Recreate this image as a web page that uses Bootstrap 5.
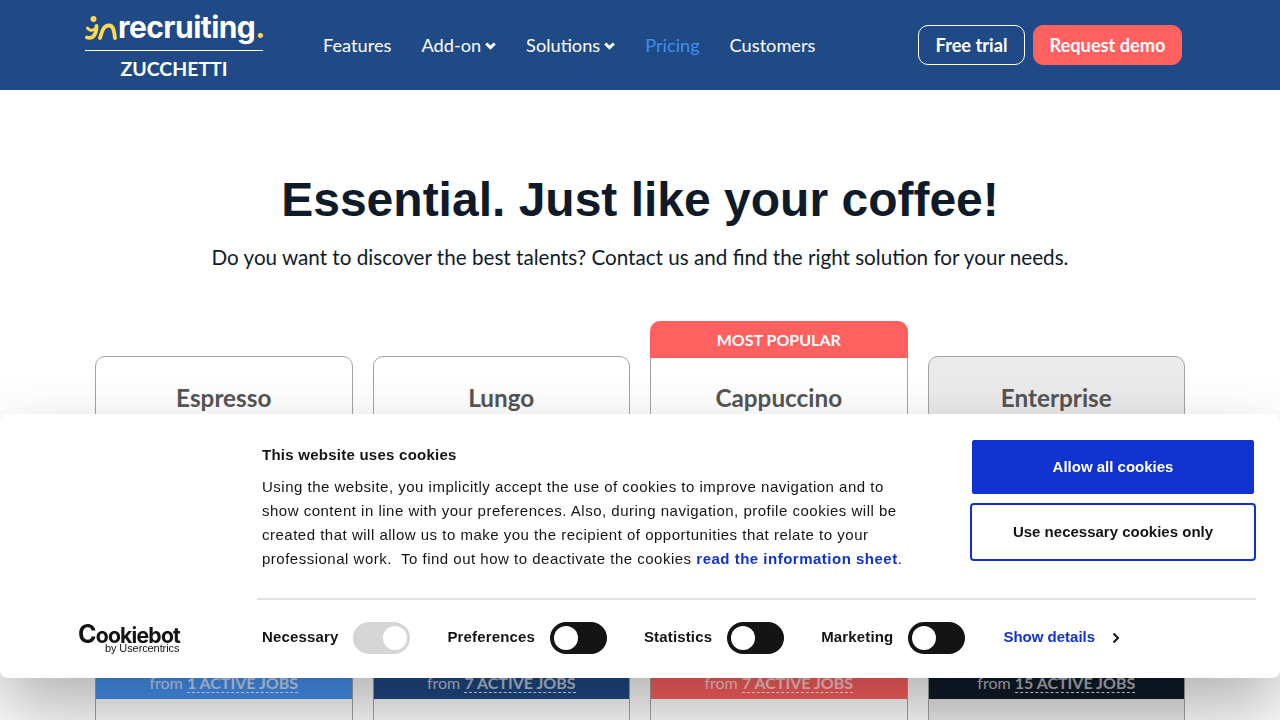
<!DOCTYPE html>
<html lang="en">

<head>
    <meta charset="UTF-8">
    <meta name="viewport" content="width=device-width, initial-scale=1.0">
    <title>Pricing - inRecruiting</title>
    <link href="https://cdn.jsdelivr.net/npm/bootstrap@5.3.3/dist/css/bootstrap.min.css" rel="stylesheet">
    <style>
        html, body { height: 720px; overflow: hidden; }
        body { font-family: "Lato", sans-serif; color: #101b29; background: #fff; }

        /* top bar */
        .top-bar { background: #1f4a85; height: 90px; padding: 0; }
        .page-wrap { width: 1110px; margin: 0 auto; }
        .brand-box { width: 178px; margin-right: 45px; padding: 0; color: #fff; }
        .brand-line { display: flex; align-items: center; height: 37px; border-bottom: 1px solid #fff; margin-bottom: 6px; padding-bottom: 4px; box-sizing: content-box; }
        .brand-word { font-family: "Inter", sans-serif; font-weight: 700; font-size: 30px; letter-spacing: -.55px; line-height: 37px; color: #fff; margin-left: 1px; }
        .brand-dot { color: #ffd84d; }
        .brand-sub { font-weight: 700; font-size: 19.5px; line-height: 24px; text-align: center; color: #fff; }
        .top-bar .nav-link { font-size: 18.2px; color: #fff; padding: 0; margin: 0 15px; line-height: 24px; }
        .top-bar .nav-link.active-page { color: #3f8ef0; }
        .nav-chev { width: 11px; height: 8px; margin-left: 4px; vertical-align: 2px; }
        .btn-trial, .btn-demo { font-size: 18.2px; font-weight: 700; height: 40px; line-height: 24px; border-radius: 10px; color: #fff; padding: 7px 0; }
        .btn-trial { border: 1px solid #fff; background: transparent; width: 107px; }
        .btn-demo { border: 1px solid #ff6060; background: #ff6060; width: 149px; margin-left: 8px; margin-right: 13px; }

        /* heading */
        .hero-title { font-family: "Liberation Sans", sans-serif; font-weight: 700; font-size: 48px; line-height: 60px; margin: 80px 0 0; text-align: center; color: #101b29; }
        .hero-sub { font-size: 20.65px; line-height: 30px; margin: 12px 0 0; text-align: center; color: #101b29; }

        /* plans */
        .plan-row { margin: 49px 0 0; --bs-gutter-x: 20px; }
        .plan-col { padding-top: 35px; }
        .plan-col.is-popular { padding-top: 0; }
        .popular-tab { background: #ff6060; color: #fff; font-weight: 700; font-size: 16px; height: 37px; line-height: 37px; text-align: center; border-radius: 10px 10px 0 0; margin-bottom: -2px; position: relative; }
        .plan-box { border: 1px solid #a3a3a3; border-radius: 10px; background: #fff; overflow: hidden; }
        .is-popular .plan-box { border-radius: 0; border-top: 0; padding-top: 1px; }
        .plan-box.is-dark { background: #ebebeb; }
        .plan-name { font-size: 24.3px; font-weight: 700; color: #555; line-height: 30px; text-align: center; margin: 26px 0 0; }
        .plan-gap { height: 243px; }
        .plan-band { height: 43px; padding-top: 16px; line-height: 22px; text-align: center; font-size: 16px; color: rgba(255, 255, 255, .7); }
        .plan-band b { border-bottom: 1px dashed rgba(255, 255, 255, .85); }
        .band-blue { background: #4894f4; }
        .band-navy { background: #1f4a85; }
        .band-red { background: #ff6060; }
        .band-dark { background: #101b29; }
        .plan-rest { height: 120px; }

        /* cookie banner */
        .cookie-banner { position: fixed; left: 0; right: 0; top: 414px; height: 264px; background: #fff; border-radius: 8px; box-shadow: 0 32px 68px rgba(0, 0, 0, .3); font-family: "Liberation Sans", sans-serif; color: #141414; z-index: 10; }
        .cookie-top { padding: 26px 24px 0 262px; height: 184px; }
        .cookie-copy { width: 645px; font-size: 15px; line-height: 24px; letter-spacing: .5px; }
        .cookie-copy h2 { font-size: 15px; font-weight: 700; line-height: 30px; margin: 0 0 5px; letter-spacing: .25px; }
        .cookie-copy p { margin: 0; }
        .cookie-copy a, .show-more { color: #1032cf; font-weight: 700; text-decoration: none; }
        .cookie-btns { width: 286px; margin-left: auto; }
        .btn-allow, .btn-necessary { display: block; font-size: 15px; font-weight: 700; border-radius: 2px; }
        .btn-allow { width: 282px; height: 54px; margin: 0 2px 9px; background: #1032cf; border: 1px solid #1032cf; color: #fff; }
        .btn-necessary { width: 286px; height: 58px; background: #fff; border: 2px solid #1032cf; border-radius: 4px; color: #141414; }
        .cookie-rule { height: 2px; background: #e2e2e2; margin: 0 24px 0 257px; }
        .cookie-bottom { height: 75px; }
        .cookie-logo { width: 262px; padding-left: 78px; padding-top: 2px; color: #141414; }
        .logo-word { font-family: "Inter", sans-serif; font-weight: 700; font-size: 21.2px; line-height: 18px; letter-spacing: -.8px; }
        .logo-word span { font-size: 25px; }
        .logo-by { font-size: 11px; line-height: 8px; margin-left: 27px; letter-spacing: -.1px; }
        .consent-item { display: flex; align-items: center; font-size: 15px; font-weight: 700; letter-spacing: .15px; margin-right: 37px; }
        .consent-item span { margin-right: 15px; }
        .switch-pill { width: 57px; height: 32px; border-radius: 16px; background: #141414; position: relative; display: inline-block; }
        .switch-pill::after { content: ""; position: absolute; left: 4px; top: 4px; width: 24px; height: 24px; border-radius: 50%; background: #fff; }
        .switch-pill.is-locked { background: #d6d6d6; }
        .switch-pill.is-locked::after { left: auto; right: 3px; }
        .show-more { font-size: 15px; margin-left: 1px; display: flex; align-items: center; }
        .show-more svg { margin-left: 17px; }
    </style>
</head>

<body>
    <nav class="navbar top-bar">
        <div class="page-wrap d-flex align-items-center">
            <a class="brand-box text-decoration-none" href="#">
                <div class="brand-line">
                    <svg width="32" height="26" viewBox="0 0 32 26" class="flex-shrink-0">
                        <circle cx="8.500" cy="4" r="3" fill="#ffd84d"/>
                        <path d="M2 22.500C7 24 11.500 21 11.500 11" fill="none" stroke="#ffd84d" stroke-width="3.800" stroke-linecap="round"/>
                        <path d="M2.500 13C4 15.500 7 16 10 14" fill="none" stroke="#ffd84d" stroke-width="3" stroke-linecap="round"/>
                        <path d="M15 23C17 17 18 10.500 24 10.500C28.500 10.500 29 16 30 23" fill="none" stroke="#ffd84d" stroke-width="3.800" stroke-linecap="round"/>
                    </svg>
                    <span class="brand-word">recruiting<span class="brand-dot">.</span></span>
                </div>
                <div class="brand-sub">ZUCCHETTI</div>
            </a>
            <ul class="nav">
                <li class="nav-item"><a class="nav-link" href="#">Features</a></li>
                <li class="nav-item"><a class="nav-link" href="#">Add-on<svg class="nav-chev" viewBox="0 0 11 8"><path d="M1.200 1.500 5.500 5.600 9.800 1.500" fill="none" stroke="#fff" stroke-width="3"/></svg></a></li>
                <li class="nav-item"><a class="nav-link" href="#">Solutions<svg class="nav-chev" viewBox="0 0 11 8"><path d="M1.200 1.500 5.500 5.600 9.800 1.500" fill="none" stroke="#fff" stroke-width="3"/></svg></a></li>
                <li class="nav-item"><a class="nav-link active-page" href="#">Pricing</a></li>
                <li class="nav-item"><a class="nav-link" href="#">Customers</a></li>
            </ul>
            <div class="ms-auto d-flex">
                <a href="#" class="btn btn-trial">Free trial</a>
                <a href="#" class="btn btn-demo">Request demo</a>
            </div>
        </div>
    </nav>

    <main class="page-wrap">
        <h1 class="hero-title">Essential. Just like your coffee!</h1>
        <p class="hero-sub">Do you want to discover the best talents? Contact us and find the right solution for your needs.</p>

        <div class="row plan-row">
            <div class="col-3 plan-col">
                <div class="plan-box">
                    <h3 class="plan-name">Espresso</h3>
                    <div class="plan-gap"></div>
                    <div class="plan-band band-blue">from <b>1 ACTIVE JOBS</b></div>
                    <div class="plan-rest"></div>
                </div>
            </div>
            <div class="col-3 plan-col">
                <div class="plan-box">
                    <h3 class="plan-name">Lungo</h3>
                    <div class="plan-gap"></div>
                    <div class="plan-band band-navy">from <b>7 ACTIVE JOBS</b></div>
                    <div class="plan-rest"></div>
                </div>
            </div>
            <div class="col-3 plan-col is-popular">
                <div class="popular-tab">MOST POPULAR</div>
                <div class="plan-box">
                    <h3 class="plan-name">Cappuccino</h3>
                    <div class="plan-gap"></div>
                    <div class="plan-band band-red">from <b>7 ACTIVE JOBS</b></div>
                    <div class="plan-rest"></div>
                </div>
            </div>
            <div class="col-3 plan-col">
                <div class="plan-box is-dark">
                    <h3 class="plan-name">Enterprise</h3>
                    <div class="plan-gap"></div>
                    <div class="plan-band band-dark">from <b>15 ACTIVE JOBS</b></div>
                    <div class="plan-rest"></div>
                </div>
            </div>
        </div>
    </main>

    <div class="cookie-banner">
        <div class="cookie-top d-flex">
            <div class="cookie-copy">
                <h2>This website uses cookies</h2>
                <p>Using the website, you implicitly accept the use of cookies to improve navigation and to show content in line with your preferences. Also, during navigation, profile cookies will be created that will allow us to make you the recipient of opportunities that relate to your professional work.&nbsp; To find out how to deactivate the cookies <a href="#">read the information sheet</a>.</p>
            </div>
            <div class="cookie-btns">
                <button class="btn btn-allow">Allow all cookies</button>
                <button class="btn btn-necessary">Use necessary cookies only</button>
            </div>
        </div>
        <div class="cookie-rule"></div>
        <div class="cookie-bottom d-flex align-items-center">
            <div class="cookie-logo">
                <div class="logo-word"><span>C</span>ookiebot</div>
                <div class="logo-by">by Usercentrics</div>
            </div>
            <div class="consent-item"><span>Necessary</span><i class="switch-pill is-locked"></i></div>
            <div class="consent-item"><span>Preferences</span><i class="switch-pill"></i></div>
            <div class="consent-item"><span>Statistics</span><i class="switch-pill"></i></div>
            <div class="consent-item"><span>Marketing</span><i class="switch-pill"></i></div>
            <a href="#" class="show-more">Show details<svg width="8" height="12" viewBox="0 0 8 12"><path d="M1.500 1.500 6 6 1.500 10.500" fill="none" stroke="#141414" stroke-width="2"/></svg></a>
        </div>
    </div>

    <script src="https://cdn.jsdelivr.net/npm/bootstrap@5.3.3/dist/js/bootstrap.bundle.min.js"></script>
</body>

</html>
